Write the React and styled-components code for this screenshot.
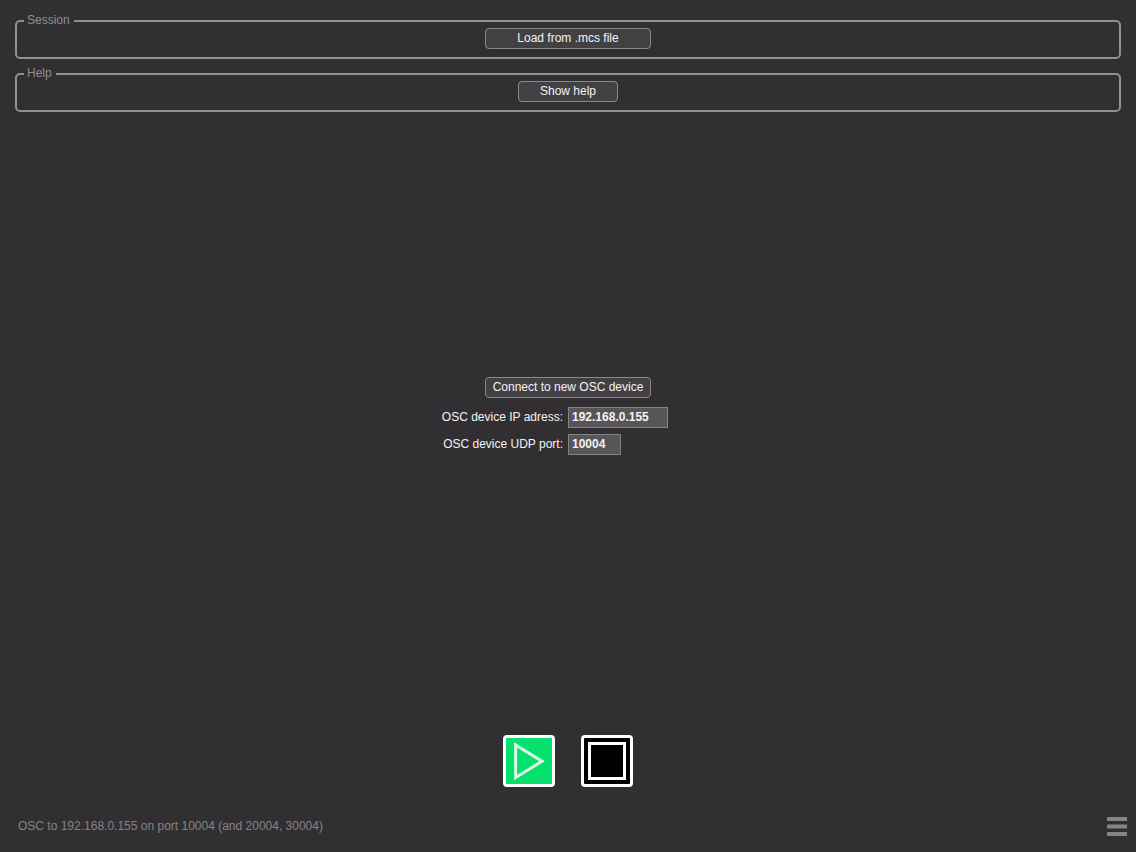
import React, { useState } from 'react'
import styled, { createGlobalStyle } from 'styled-components'

const GlobalStyle = createGlobalStyle`
    * {
        box-sizing: border-box;
    }
    body {
        margin: 0;
        background: #322f32;
        color: #f4f3f4;
        font-family: "Liberation Sans", Arial, sans-serif;
        font-size: 12px;
        line-height: 16px;
    }
    button, input {
        font: inherit;
        color: inherit;
    }
`

function App() {
    const [ip, setIp] = useState('192.168.0.155')
    const [port, setPort] = useState('10004')

    return (
        <Page>
            <GlobalStyle />
            <Header>
                <Group>
                    <GroupTitle>Session</GroupTitle>
                    <Button type="button" $width={166}>Load from .mcs file</Button>
                </Group>
                <Group>
                    <GroupTitle>Help</GroupTitle>
                    <Button type="button" $width={100}>Show help</Button>
                </Group>
            </Header>
            <Main>
                <Button type="button" $width={166}>Connect to new OSC device</Button>
                <Fields>
                    <Label htmlFor="ip">OSC device IP adress:</Label>
                    <Field id="ip" $width={100} value={ip} onChange={(e) => setIp(e.target.value)} />
                    <Label htmlFor="port">OSC device UDP port:</Label>
                    <Field id="port" $width={53} value={port} onChange={(e) => setPort(e.target.value)} />
                </Fields>
            </Main>
            <Transport>
                <TransportButton type="button" aria-label="Play" $color="#06e06c">
                    <svg width="46" height="46" viewBox="0 0 46 46" fill="none" stroke="#d8fbe7" strokeWidth="3">
                        <path d="M9.6 7V39.6L36 23.2Z" />
                    </svg>
                </TransportButton>
                <TransportButton type="button" aria-label="Stop" $color="#000">
                    <svg width="46" height="46" viewBox="0 0 46 46" fill="none" stroke="#fff" strokeWidth="3">
                        <rect x="5.5" y="5.5" width="35" height="35" />
                    </svg>
                </TransportButton>
            </Transport>
            <Footer>
                <span>OSC to {ip} on port {port} (and 20004, 30004)</span>
                <MenuButton type="button" aria-label="Menu">
                    <svg width="20" height="20" viewBox="0 0 20 20" fill="#858385">
                        <rect y="1" width="20" height="4" rx="0.5" />
                        <rect y="8.5" width="20" height="4" rx="0.5" />
                        <rect y="16" width="20" height="4" rx="0.5" />
                    </svg>
                </MenuButton>
            </Footer>
        </Page>
    )
}

const Page = styled.div`
    min-height: 100vh;
    display: flex;
    flex-direction: column;
`

const Header = styled.header`
    display: flex;
    flex-direction: column;
    gap: 8px;
    padding: 14px 15px 0;
`

const Group = styled.fieldset`
    margin: 0;
    padding: 0 7px 8px;
    border: 2px solid #918f91;
    border-radius: 5px;
`

const GroupTitle = styled.legend`
    padding: 0 4px 2px 3px;
    color: #918f91;
    line-height: 12px;
`

const Button = styled.button`
    display: block;
    width: ${({ $width }) => $width}px;
    height: 21px;
    margin: 0 auto;
    padding: 0 0 1px;
    border: 1px solid #8b898b;
    border-radius: 4px;
    background: #434043;
    line-height: 16px;
    white-space: nowrap;
`

const Main = styled.main`
    flex: 1;
    display: flex;
    flex-direction: column;
    justify-content: center;
    gap: 9px;
    padding-bottom: 16px;
`

const Fields = styled.div`
    display: grid;
    grid-template-columns: 1fr 1fr;
    align-items: center;
    row-gap: 6px;
`

const Label = styled.label`
    padding: 0 5px 1px 0;
    text-align: right;
`

const Field = styled.input`
    width: ${({ $width }) => $width}px;
    height: 21px;
    padding: 0 3px 1px;
    border: 1px solid #858385;
    border-radius: 0;
    background: #575557;
    font-weight: bold;
`

const Transport = styled.div`
    display: flex;
    justify-content: center;
    gap: 26px;
`

const TransportButton = styled.button`
    display: flex;
    width: 52px;
    height: 52px;
    padding: 0;
    border: 3px solid #fff;
    border-radius: 4px;
    background: ${({ $color }) => $color};
`

const Footer = styled.footer`
    display: flex;
    align-items: center;
    justify-content: space-between;
    padding: 29px 9px 16px 18px;
    color: #858385;
`

const MenuButton = styled.button`
    display: flex;
    padding: 0;
    border: none;
    background: none;
`

export default App
